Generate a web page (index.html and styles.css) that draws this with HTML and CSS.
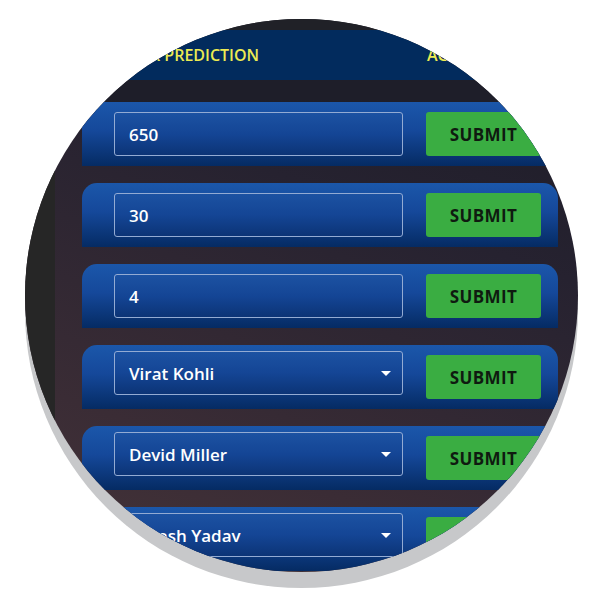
FILE: index.html
```html
<!DOCTYPE html>
<html>
<head>
<meta charset="utf-8">
<link rel="stylesheet" href="styles.css">
</head>
<body>
<div class="stage">
  <div class="disc">
    <div class="top-strip"></div>
    <div class="header">
      <span class="col-a">YOUR PREDICTION</span>
      <span class="col-b">ACTUAL</span>
    </div>
    <div class="content">
      <div class="side"></div>
      <div class="main">
        <div class="row flat">
          <div class="field">650</div>
          <div class="submit">SUBMIT</div>
        </div>
        <div class="row">
          <div class="field">30</div>
          <div class="submit">SUBMIT</div>
        </div>
        <div class="row">
          <div class="field">4</div>
          <div class="submit">SUBMIT</div>
        </div>
        <div class="row">
          <div class="field select">Virat Kohli<span class="caret"></span></div>
          <div class="submit">SUBMIT</div>
        </div>
        <div class="row">
          <div class="field select">Devid Miller<span class="caret"></span></div>
          <div class="submit">SUBMIT</div>
        </div>
        <div class="row">
          <div class="field select">Umesh Yadav<span class="caret"></span></div>
          <div class="submit">SUBMIT</div>
        </div>
      </div>
    </div>
  </div>
</div>
</body>
</html>
```

FILE: styles.css
```css
html, body {
  margin: 0;
  padding: 0;
  background: #ffffff;
  width: 600px;
  height: 600px;
  overflow: hidden;
}

.stage {
  position: relative;
  padding: 19px 0 0 25px;
}

.disc {
  position: relative;
  width: 553px;
  height: 553px;
  border-radius: 50%;
  overflow: hidden;
  background: linear-gradient(200deg, #1b1b25 0%, #262230 35%, #3a2c35 75%, #453439 100%);
  font-family: "Open Sans", "Noto Sans", sans-serif;
  display: flex;
  flex-direction: column;
}

.stage::before {
  content: "";
  position: absolute;
  left: 25px;
  top: 35px;
  width: 553px;
  height: 553px;
  border-radius: 50%;
  background: #c7c8ca;
}

.top-strip {
  height: 11px;
  background: #202127;
  flex: none;
}

.header {
  height: 50px;
  flex: none;
  background: #022b5d;
  display: flex;
  align-items: center;
  color: #ecea52;
  font-size: 16px;
  font-weight: 600;
}

.col-a {
  margin-left: 91px;
  width: 311px;
}

.col-b {
  white-space: nowrap;
}

.content {
  flex: 1;
  display: flex;
}

.side {
  width: 30px;
  flex: none;
  background: #262626;
}

.main {
  flex: 1;
  padding: 22px 0 0 27px;
  display: flex;
  flex-direction: column;
  gap: 17px;
  background: linear-gradient(180deg, #1e1e29 0px, #1e1e29 20px, rgba(0,0,0,0) 60px);
}

.row {
  width: 476px;
  height: 64px;
  box-sizing: border-box;
  padding: 0 17px 0 32px;
  display: flex;
  align-items: center;
  gap: 23px;
  background: linear-gradient(180deg, #1b57aa 0%, #15489a 45%, #052b63 100%);
  border-radius: 15px 15px 0 0;
  flex: none;
}

.row.flat {
  border-radius: 0;
}

.field {
  position: relative;
  width: 289px;
  height: 44px;
  box-sizing: border-box;
  border: 1px solid #93abd3;
  border-radius: 3px;
  background: linear-gradient(180deg, #1c52a2 0%, #144595 50%, #0c3476 100%);
  color: #ffffff;
  font-size: 17px;
  font-weight: 600;
  padding-left: 14px;
  display: flex;
  align-items: center;
}

.field.select {
  margin-bottom: 8px;
}

.caret {
  position: absolute;
  right: 11px;
  top: 19px;
  width: 0;
  height: 0;
  border-left: 5px solid transparent;
  border-right: 5px solid transparent;
  border-top: 5px solid #ffffff;
}

.submit {
  width: 115px;
  height: 44px;
  border-radius: 3px;
  background: #3aad42;
  color: #0f1a10;
  font-size: 17px;
  font-weight: 700;
  letter-spacing: 0.4px;
  display: flex;
  align-items: center;
  justify-content: center;
  flex: none;
}
```
